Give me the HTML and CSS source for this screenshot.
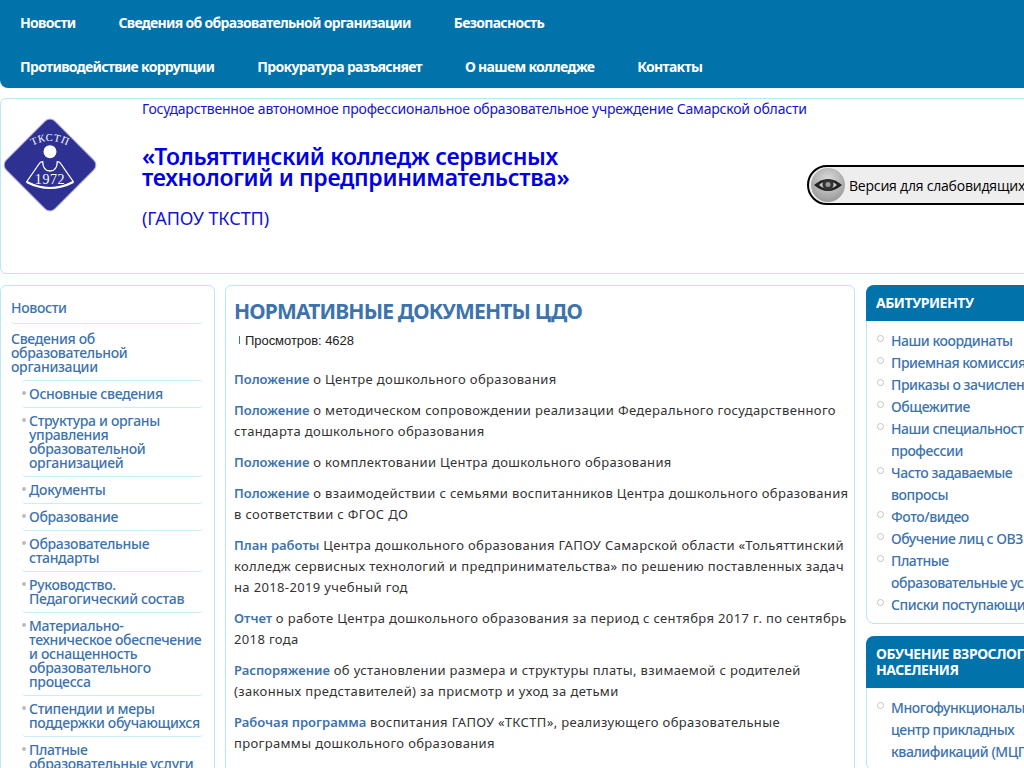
FILE: index.html
```html
<!DOCTYPE html>
<html lang="ru">
<head>
  <meta charset="utf-8" />
  <meta name="viewport" content="width=device-width, initial-scale=1.0" />
  <title>Нормативные документы ЦДО</title>
  <link rel="stylesheet" href="styles.css">
</head>
<body>
  <div class="page">

    <nav class="topnav">
      <ul>
        <li><a href="#">Новости</a></li>
        <li><a href="#">Сведения об образовательной организации</a></li>
        <li><a href="#">Безопасность</a></li>
      </ul>
      <ul>
        <li><a href="#">Противодействие коррупции</a></li>
        <li><a href="#">Прокуратура разъясняет</a></li>
        <li><a href="#">О нашем колледже</a></li>
        <li><a href="#">Контакты</a></li>
      </ul>
    </nav>

    <header class="header">
      <svg class="logo" viewBox="0 0 96 96" width="96" height="96">
        <rect x="13.500" y="13.500" width="69" height="69" rx="7" transform="rotate(45 48 48)" fill="#2e3192" stroke="#b5b5e0" stroke-width="1"/>
        <path id="logoArc" d="M24 33 Q48 15 72 33" fill="none"/>
        <text class="logo-top"><textPath href="#logoArc" startOffset="50%" text-anchor="middle">ТКСТП</textPath></text>
        <circle cx="48" cy="34.700" r="6.500" fill="#fff"/>
        <path d="M40.700 44.700 Q41 54 48 54 Q55 54 55.300 44.700 Q58 45 59 47 L71.300 64.700 Q48 77 24.700 64.700 L37 47 Q38 45 40.700 44.700 Z" fill="none" stroke="#fff" stroke-width="1.300"/>
        <path d="M24.700 65 Q48 77 71.300 65" fill="none" stroke="#fff" stroke-width="2.200"/>
        <text class="logo-year" x="48" y="67" text-anchor="middle">1972</text>
      </svg>
      <div class="header-text">
        <div class="org-type">Государственное автономное профессиональное образовательное учреждение Самарской области</div>
        <h1>«Тольяттинский колледж сервисных<br>технологий и предпринимательства»</h1>
        <div class="org-short">(ГАПОУ ТКСТП)</div>
      </div>
      <a class="eye-button" href="#">
        <span class="eye-icon">
          <svg viewBox="0 0 30 30" width="30" height="30">
            <path d="M1 15 Q15 3 29 15 Q15 27 1 15 Z" fill="#222"/>
            <path d="M6 15 Q15 7 24 15 Q15 23 6 15 Z" fill="#ccc"/>
            <circle cx="15" cy="14.500" r="5.500" fill="#333"/>
            <circle cx="15" cy="14.500" r="2.500" fill="#999"/>
          </svg>
        </span>
        Версия для слабовидящих
      </a>
    </header>

    <div class="columns">
      <aside class="sidebar">
        <ul class="side-menu">
          <li class="side-first"><a href="#">Новости</a></li>
          <li><a href="#">Сведения об образовательной организации</a>
            <ul>
              <li><a href="#">Основные сведения</a></li>
              <li><a href="#">Структура и органы управления образовательной организацией</a></li>
              <li><a href="#">Документы</a></li>
              <li><a href="#">Образование</a></li>
              <li><a href="#">Образовательные стандарты</a></li>
              <li><a href="#">Руководство. Педагогический состав</a></li>
              <li><a href="#">Материально-техническое обеспечение и оснащенность образовательного процесса</a></li>
              <li><a href="#">Стипендии и меры поддержки обучающихся</a></li>
              <li><a href="#">Платные образовательные услуги</a></li>
            </ul>
          </li>
        </ul>
      </aside>

      <main class="content">
        <h2>Нормативные документы ЦДО</h2>
        <div class="views"><span class="views-mark"></span>Просмотров: 4628</div>
        <p><a href="#">Положение</a> о Центре дошкольного образования</p>
        <p><a href="#">Положение</a> о методическом сопровождении реализации Федерального государственного стандарта дошкольного образования</p>
        <p><a href="#">Положение</a> о комплектовании Центра дошкольного образования</p>
        <p><a href="#">Положение</a> о взаимодействии с семьями воспитанников Центра дошкольного образования в соответствии с ФГОС ДО</p>
        <p><a href="#">План работы</a> Центра дошкольного образования ГАПОУ Самарской области «Тольяттинский колледж сервисных технологий и предпринимательства» по решению поставленных задач на 2018-2019 учебный год</p>
        <p><a href="#">Отчет</a> о работе Центра дошкольного образования за период с сентября 2017 г. по сентябрь 2018 года</p>
        <p><a href="#">Распоряжение</a> об установлении размера и структуры платы, взимаемой с родителей (законных представителей) за присмотр и уход за детьми</p>
        <p><a href="#">Рабочая программа</a> воспитания ГАПОУ «ТКСТП», реализующего образовательные программы дошкольного образования</p>
      </main>

      <aside class="rightbar">
        <section class="panel">
          <h3>Абитуриенту</h3>
          <ul>
            <li><a href="#">Наши координаты</a></li>
            <li><a href="#">Приемная комиссия</a></li>
            <li><a href="#">Приказы о зачислении</a></li>
            <li><a href="#">Общежитие</a></li>
            <li><a href="#">Наши специальности и профессии</a></li>
            <li><a href="#">Часто задаваемые вопросы</a></li>
            <li><a href="#">Фото/видео</a></li>
            <li><a href="#">Обучение лиц с ОВЗ</a></li>
            <li><a href="#">Платные образовательные услуги</a></li>
            <li><a href="#">Списки поступающих</a></li>
          </ul>
        </section>
        <section class="panel">
          <h3>Обучение взрослого населения</h3>
          <ul>
            <li><a href="#">Многофункциональный центр прикладных квалификаций (МЦПК)</a></li>
          </ul>
        </section>
      </aside>
    </div>

  </div>
</body>
</html>
```

FILE: styles.css
```css
html, body {
  height: 100%;
}

body {
  margin: 0;
  font-family: "Noto Sans", "Open Sans", sans-serif;
  font-size: 13px;
  color: #333;
  background: #fff;
  overflow: hidden;
}

a {
  text-decoration: none;
  color: #3d73ad;
}

ul {
  list-style: none;
  margin: 0;
  padding: 0;
}

.page {
  width: 1070px;
}

/* top menu */
.topnav {
  background: #0272ab;
  border-radius: 0 0 8px 8px;
  height: 88px;
}

.topnav ul {
  display: flex;
  height: 44px;
  align-items: center;
  padding-left: 20px;
  gap: 43px;
}

.topnav a {
  color: #fff;
  font-size: 14px;
  font-weight: 700;
  letter-spacing: -0.69px;
}

/* header */
.header {
  display: flex;
  height: 174px;
  margin-top: 10px;
  border: 1px solid #b6e8f5;
  border-radius: 6px;
}

.logo {
  flex: none;
  margin: 18px 0 0 1px;
}

.header-text {
  width: 665px;
  margin-left: 44px;
  color: #1414d2;
}

.org-type {
  font-size: 14px;
  line-height: 20px;
  letter-spacing: -0.19px;
  white-space: nowrap;
}

.header h1 {
  margin: 27px 0 0;
  font-size: 23px;
  font-weight: 600;
  line-height: 21px;
  color: #0000e6;
  letter-spacing: -0.3px;
  white-space: nowrap;
}

.org-short {
  margin-top: 18px;
  font-size: 18px;
  line-height: 24px;
  letter-spacing: -0.05px;
}

.eye-button {
  flex: none;
  display: flex;
  align-items: center;
  gap: 4px;
  align-self: flex-start;
  width: 250px;
  height: 36px;
  margin-top: 66px;
  border: 2px solid #000;
  border-radius: 20px;
  background: #eee;
  color: #000;
  font-family: "Open Sans", sans-serif;
  font-size: 14px;
  font-weight: 500;
  letter-spacing: -0.2px;
  white-space: nowrap;
}

.eye-icon {
  display: flex;
  align-items: center;
  justify-content: center;
  width: 34px;
  height: 34px;
  margin-left: 2px;
  border-radius: 50%;
  background: radial-gradient(circle at 50% 35%, #ddd, #888);
}

.logo-top {
  font-family: "Liberation Serif", serif;
  font-size: 10.500px;
  letter-spacing: 0.5px;
  fill: #fff;
}

.logo-year {
  font-family: "Liberation Serif", serif;
  font-size: 14px;
  letter-spacing: 0.6px;
  fill: #fff;
}

/* three columns */
.columns {
  display: flex;
  align-items: flex-start;
  margin-top: 11px;
}

.sidebar {
  flex: none;
  width: 213px;
  height: 600px;
  padding-top: 7px;
  border: 1px solid #b6e8f5;
  border-radius: 6px;
}

.side-menu {
  padding: 0 11px 0 10px;
}

.side-menu a {
  display: block;
  font-size: 14px;
  font-weight: 500;
  line-height: 14px;
  letter-spacing: -0.33px;
}

.side-menu > li > a {
  padding: 8px 0 6px;
}

.side-first {
  border-bottom: 1px solid #c8eef8;
  border-radius: 0 0 4px 4px;
}

.side-menu > .side-first > a {
  padding-bottom: 8px;
}

.side-menu ul {
  margin-left: 11px;
  border-top: 1px solid #c8eef8;
  border-radius: 4px 4px 0 0;
}

.side-menu ul li {
  position: relative;
  padding: 6px 0 6px 7px;
  border-bottom: 1px solid #c8eef8;
  border-radius: 0 0 4px 4px;
}

.side-menu ul li::before {
  content: "";
  position: absolute;
  left: 0;
  top: 10px;
  width: 4px;
  height: 4px;
  border-radius: 50%;
  background: #bbb;
}

.content {
  flex: none;
  width: 618px;
  height: 600px;
  margin-left: 10px;
  padding: 0 2px 0 8px;
  border: 1px solid #b6e8f5;
  border-radius: 6px;
}

.content h2 {
  margin: 11px 0 0;
  font-size: 21px;
  line-height: 29px;
  font-weight: 700;
  color: #3d73ad;
  text-transform: uppercase;
  letter-spacing: -0.84px;
}

.views {
  display: flex;
  align-items: center;
  height: 20px;
  margin: 4px 0 19px 5px;
  font-family: "Liberation Sans", sans-serif;
  font-size: 13px;
  letter-spacing: -0.05px;
  color: #222;
}

.views-mark {
  width: 1px;
  height: 8px;
  margin-right: 5px;
  background: #3d73ad;
}

.content p {
  margin: 0 0 10px;
  line-height: 21px;
  letter-spacing: 0.36px;
}

.content p a {
  font-weight: 600;
  letter-spacing: 0;
}

.rightbar {
  flex: none;
  width: 204px;
  margin-left: 11px;
}

.panel {
  margin-bottom: 12px;
  border: 1px solid #b6e8f5;
  border-radius: 8px;
}

.panel h3 {
  margin: -1px -1px 0;
  padding: 10px 10px;
  background: #0272ab;
  border-radius: 8px 8px 0 0;
  color: #fff;
  font-size: 14px;
  line-height: 16px;
  font-weight: 700;
  text-transform: uppercase;
  letter-spacing: -0.45px;
}

.panel ul {
  padding: 9px 4px 7px 24px;
}

.panel li {
  position: relative;
  font-size: 14px;
  line-height: 22px;
}

.panel li::before {
  content: "";
  position: absolute;
  left: -14px;
  top: 5px;
  width: 5px;
  height: 5px;
  border: 1px solid #c4c4c4;
  border-radius: 50%;
}

.panel a {
  font-weight: 500;
  letter-spacing: -0.45px;
}
```
